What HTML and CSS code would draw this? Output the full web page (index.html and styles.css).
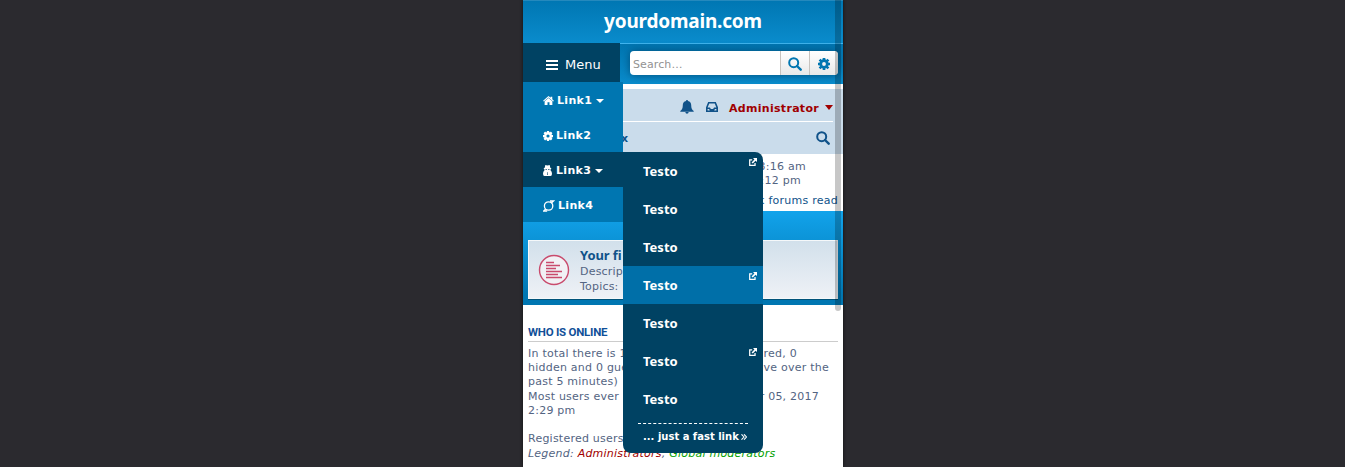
FILE: index.html
```html
<!DOCTYPE html>
<html lang="en">
<head>
<meta charset="utf-8">
<title>yourdomain.com</title>
<link rel="stylesheet" href="styles.css">
</head>
<body>
<svg width="0" height="0" class="defs">
  <symbol id="search" viewBox="0 0 14 14"><circle cx="5.7" cy="5.7" r="4.5" fill="none" stroke="currentColor" stroke-width="2"/><path d="M9 9l3.7 3.7" stroke="currentColor" stroke-width="2.4" stroke-linecap="round"/></symbol>
  <symbol id="gear" viewBox="0 0 12 12"><circle cx="6" cy="6" r="3.3" fill="none" stroke="currentColor" stroke-width="2.800"/><path d="M6 0v2.4M6 9.6V12M0 6h2.4M9.6 6H12M1.600 1.600l1.800 1.800M8.6 8.6l1.800 1.800M1.600 10.400l1.800-1.800M8.6 3.4l1.800-1.800" stroke="currentColor" stroke-width="2.700"/></symbol>
  <symbol id="external" viewBox="0 0 9 9"><path d="M3.6 2.2H.8v6h6V5.6" fill="none" stroke="currentColor" stroke-width="1.4"/><path d="M4.5 0H9v4.5L7.5 3 4.2 6.3 2.9 5 6.1 1.6z" fill="currentColor"/></symbol>
</svg>
<div class="phone">
  <header class="brand"><h1>yourdomain.com</h1></header>
  <div class="toolbar">
    <nav class="menu">
      <a class="toggle"><svg width="12" height="10" viewBox="0 0 12 10"><path d="M0 1h12M0 5h12M0 9h12" stroke="currentColor" stroke-width="2"/></svg><span>Menu</span></a>
      <ul class="dropdown">
        <li><svg width="11" height="9" viewBox="0 0 12 10"><path d="M6 0l2.3 2V.7h1.900v3L12 5.2l-.8.8L6 1.7.8 6 0 5.2z" fill="currentColor"/><path d="M6 2.300l4.300 3.600V10H7.1V7H4.9v3h-3.200V5.900z" fill="currentColor"/></svg><span class="name">Link1</span><i class="caret"></i></li>
        <li><svg width="10" height="10"><use href="#gear"/></svg><span class="name">Link2</span></li>
        <li class="open"><svg width="9" height="11" viewBox="0 0 9 11"><path fill="currentColor" fill-rule="evenodd" d="M2.300 0q2.200.9 4.400 0l.6 2.700 1.200.6-.9.900v1.200q1.400.8 1.400 3.300Q9 11 7.500 11h-6Q0 11 0 8.700q0-2.500 1.400-3.300V4.200L.5 3.300 1.700 2.700zM2.500 4.200v.9h1.400v-.9zM5.100 4.200v.9h1.400v-.9zM4.100 7.200l.2.900-.3 1.700h1l-.3-1.700.2-.9z"/></svg><span class="name">Link3</span><i class="caret"></i>
          <div class="submenu">
            <a>Testo<svg><use href="#external"/></svg></a>
            <a>Testo</a>
            <a>Testo</a>
            <a class="active">Testo<svg><use href="#external"/></svg></a>
            <a>Testo</a>
            <a>Testo<svg><use href="#external"/></svg></a>
            <a>Testo</a>
            <div class="fast"><span>... just a fast link</span><svg width="6" height="6" viewBox="0 0 6 6"><path d="M.5.3L3 3 .5 5.700M3 .3L5.500 3 3 5.700" fill="none" stroke="currentColor" stroke-width="1.100"/></svg></div>
          </div>
        </li>
        <li><svg width="12" height="12" viewBox="0 0 12 12" fill="none" stroke="currentColor" stroke-width="1.300"><circle cx="5.600" cy="6" r="4.200"/><path d="M8.400 3L10.600 1H7M2.700 9L.6 11H4.200"/></svg><span class="name">Link4</span></li>
      </ul>
    </nav>
    <div class="search">
      <span class="field">Search…</span>
      <span class="btn"><svg width="14" height="14"><use href="#search"/></svg></span>
      <span class="btn"><svg width="12" height="12"><use href="#gear"/></svg></span>
    </div>
  </div>
  <div class="navbar">
    <div class="user">
      <svg width="14" height="14" viewBox="0 0 14 14"><path fill="currentColor" d="M7 0c.7 0 1 .5.900 1 2.400.5 3.300 2.300 3.300 4.200 0 3 .8 4.600 2.500 5.800v.7H.3V11C2 9.800 2.800 8.200 2.800 5.200 2.800 3.300 3.700 1.500 6.100 1 6 .5 6.300 0 7 0zM5.300 12.100h3.400Q8.500 13.800 7 13.800T5.300 12.100z"/></svg>
      <svg class="inbox" width="12" height="10" viewBox="0 0 12 10"><path d="M.8 5.500L2.700.8h6.600l1.900 4.700v3.700H.8zM.8 6.200h2.700l.8 1.500h3.400l.8-1.500h2.700" fill="none" stroke="currentColor" stroke-width="1.600"/></svg>
      <b>Administrator</b><i class="caret big"></i>
    </div>
    <div class="crumbs"><b>x</b><svg width="14" height="14"><use href="#search"/></svg></div>
  </div>
  <div class="times">
    <p class="t1">3:16 am</p>
    <p class="t2">3:12 pm</p>
    <p class="t3">k forums read</p>
  </div>
  <section class="forum">
    <div class="row">
      <svg width="32" height="32" viewBox="0 0 32 32" fill="none" stroke="#c94b6d"><circle cx="16" cy="16" r="14.500" stroke-width="1.400" fill="#f1f1f5"/><path d="M8 8.500h8M8 11.500h14M8 14.500h10M8 17.500h16M8 20.500h12M8 23.500h16" stroke-width="1.300"/></svg>
      <div><h3>Your fi</h3><p>Descrip</p><p>Topics:</p></div>
    </div>
  </section>
  <section class="online">
    <h2>WHO IS ONLINE</h2>
    <p><span>In total there is 1</span><span class="a">red, 0</span></p>
    <p><span>hidden and 0 gue</span><span class="b">ve over the</span></p>
    <p class="last">past 5 minutes)</p>
    <p><span>Most users ever</span><span class="c">r 05, 2017</span></p>
    <p class="gap">2:29 pm</p>
    <p class="reg">Registered users</p>
    <p><em>Legend: <span class="red">Administrators</span>, <span class="green">Global moderators</span></em></p>
  </section>
  <div class="scrollbar"></div>
</div>
</body>
</html>
```
FILE: styles.css
```css
* { box-sizing: border-box; }
body { margin: 0; height: 467px; overflow: hidden; background: #2b2a2f; font: 11px/14px "DejaVu Sans", sans-serif; color: #536482; }
h1, h2, h3, p, ul { margin: 0; padding: 0; }
svg { display: block; flex: none; }
.defs { position: absolute; }
.phone { position: relative; width: 320px; height: 467px; margin-left: 523px; background: #fff; overflow: hidden; box-shadow: 0 0 3px #111; }
.brand { height: 43px; background: linear-gradient(#0077b3, #0a8ccc); border-top: 1px solid #2589bd; text-align: center; }
h1 { color: #fff; font: bold 19px/40px "Noto Sans", sans-serif; letter-spacing: -.2px; }
.toolbar { display: flex; height: 41px; background: linear-gradient(#0075b0, #0a8ccc); border-top: 1px solid #40b4ee; }
.menu { position: relative; z-index: 3; width: 97px; margin-top: -1px; color: #fff; }
.toggle { display: flex; align-items: center; height: 39px; padding: 4px 0 0 23px; background: #004263; font-size: 13px; gap: 7px; }
.dropdown { position: absolute; top: 39px; left: 0; width: 100px; background: #0076b1; list-style: none; }
.dropdown li { position: relative; height: 35px; padding: 2px 0 0 20px; display: flex; align-items: center; font-weight: bold; }
.dropdown li.open { background: #004263; }
.name { margin-left: 3px; letter-spacing: .3px; }
.open .name { margin-left: 4px; }
.caret { margin-left: 4px; border: 4px solid transparent; border-top-color: currentColor; border-bottom: 0; }
.submenu { position: absolute; left: 100px; top: 0; width: 140px; height: 301px; border-radius: 0 8px 8px 8px; background: #004263; }
.submenu a { display: flex; justify-content: space-between; height: 38px; padding: 0 6px 0 20px; font: bold 13px/39px "Noto Sans", sans-serif; }
.submenu a svg { width: 8px; height: 8px; margin-top: 6px; }
.submenu .active { background: #006fa8; }
.fast { display: flex; align-items: center; gap: 2px; margin: 5px 15px 0; padding: 0 0 0 5px; height: 27px; border-top: 1px dashed #fff; font-size: 10px; white-space: nowrap; }
.search { display: flex; width: 208px; height: 24px; margin: 7px 0 0 10px; border-radius: 4px; overflow: hidden; background: #fff; color: #0076b1; box-shadow: 0 0 8px #004d78; }
.field { flex: 1; padding: 2px 3px; line-height: 24px; color: #929292; font-size: 11px; letter-spacing: .1px; }
.btn { width: 29px; display: flex; align-items: center; justify-content: center; padding-top: 2px; border-left: 1px solid #c7c3bf; background: linear-gradient(#fff, #e9e9e9); }
.navbar { height: 65px; margin-top: 5px; background: #cadceb; color: #105289; letter-spacing: .3px; }
.user { display: flex; align-items: center; height: 33px; margin-right: 10px; padding: 4px 0 0 157px; border-bottom: 1px solid #fff; }
.inbox { margin: 0 11px 0 12px; }
.user b { color: #a00000; padding-top: 3px; }
.user .caret { color: #a00000; border-width: 5px 4.500px 0; margin-left: 6px; }
.crumbs { display: flex; justify-content: space-between; height: 32px; align-items: center; padding: 0 13px 0 98px; }
.crumbs b { padding-top: 1px; }
.times { height: 57px; padding-top: 6px; text-align: right; letter-spacing: .25px; }
.t1 { padding-right: 37px; }
.t2 { padding-right: 42px; }
.t3 { padding: 6px 5px 0; color: #105289; }
.forum { height: 94px; padding: 29px 5px 6px; background: linear-gradient(#12a3eb, #0076b1 90%); }
.row { display: flex; height: 59px; background: linear-gradient(#d2e0eb, #eef1f6); border: 1px solid #f5f8fa; padding: 5px 9px; gap: 10px; box-shadow: 0 1px #00527a; }
.row > svg { margin-top: 8px; }
h3 { color: #105289; font: bold 13px/18px "Noto Sans", sans-serif; white-space: nowrap; letter-spacing: -.1px; }
.row p { line-height: 15px; letter-spacing: .2px; }
.online { padding: 20px 5px 0; letter-spacing: .23px; }
h2 { height: 17px; margin-bottom: 5px; border-bottom: 1px solid #ccc; color: #115098; font: bold 11.500px/15px Roboto, sans-serif; letter-spacing: -.25px; }
.online p { display: flex; justify-content: space-between; white-space: nowrap; }
.online .last { margin-bottom: 1px; }
.a { margin-right: 41px; }
.b { margin-right: 9px; }
.c { margin-right: 19px; }
.gap { margin-bottom: 14px; }
.reg { margin-bottom: 1px; }
.red { color: #a00000; }
.green { color: #00a000; }
.scrollbar { position: absolute; z-index: 2; top: 0; right: 2px; width: 6px; height: 311px; border-radius: 0 0 3px 3px; background: rgba(0, 0, 0, .22); }
```
